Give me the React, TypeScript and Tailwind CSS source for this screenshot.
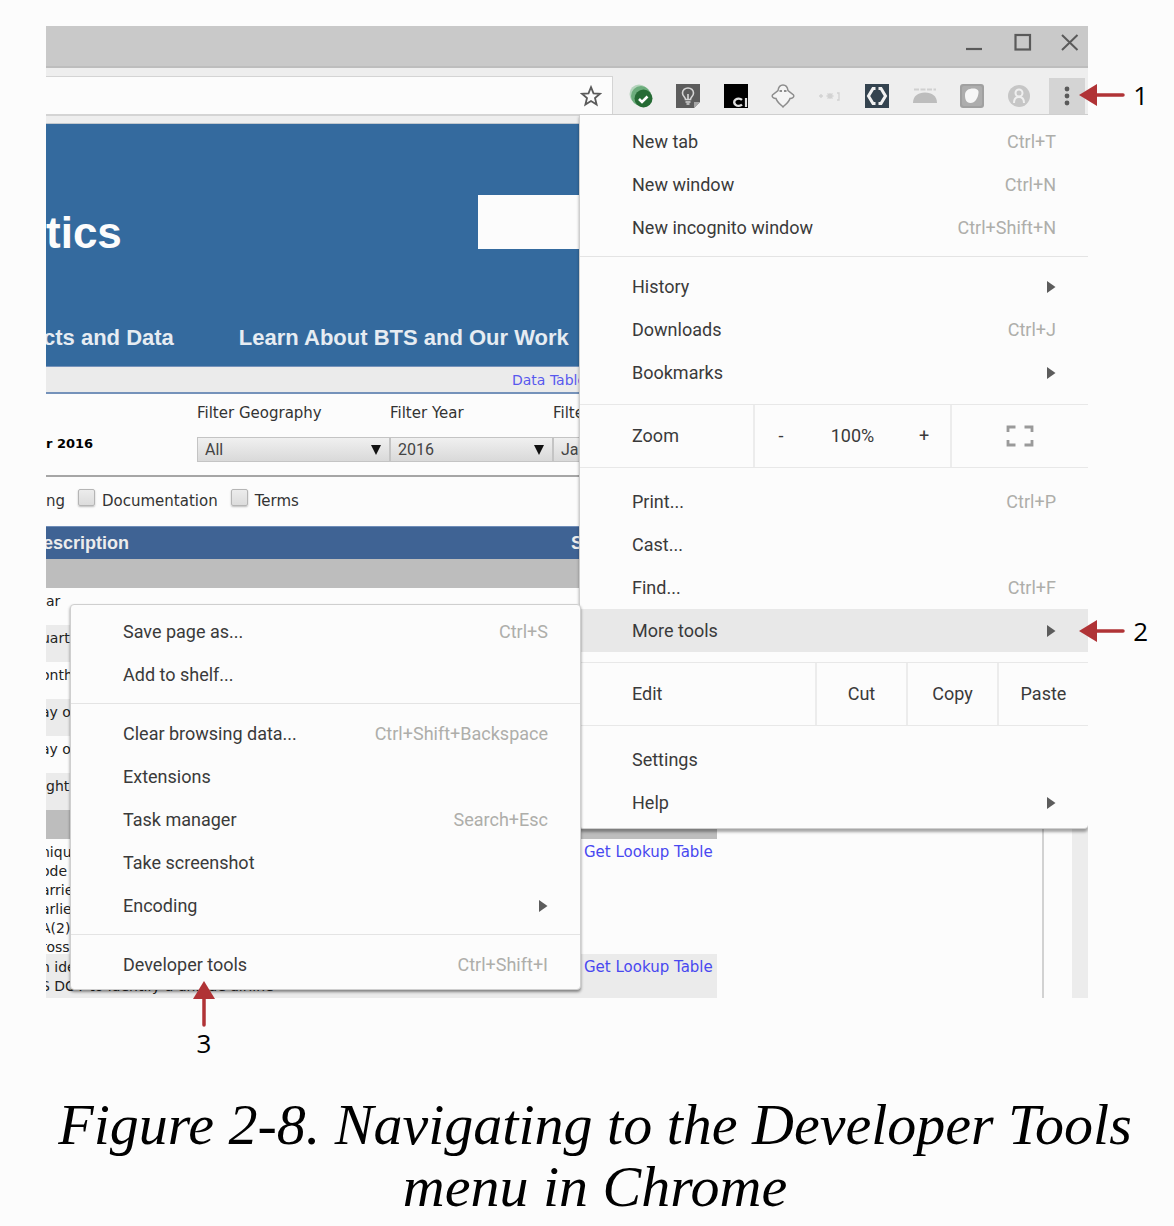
import type { ReactNode } from "react";

type Item = { label: string; keys?: string; sub?: boolean; active?: boolean };

const mainGroups: Item[][] = [
  [
    { label: "New tab", keys: "Ctrl+T" },
    { label: "New window", keys: "Ctrl+N" },
    { label: "New incognito window", keys: "Ctrl+Shift+N" },
  ],
  [
    { label: "History", sub: true },
    { label: "Downloads", keys: "Ctrl+J" },
    { label: "Bookmarks", sub: true },
  ],
  [
    { label: "Print...", keys: "Ctrl+P" },
    { label: "Cast..." },
    { label: "Find...", keys: "Ctrl+F" },
    { label: "More tools", sub: true, active: true },
  ],
  [{ label: "Settings" }, { label: "Help", sub: true }],
];

const toolGroups: Item[][] = [
  [{ label: "Save page as...", keys: "Ctrl+S" }, { label: "Add to shelf..." }],
  [
    { label: "Clear browsing data...", keys: "Ctrl+Shift+Backspace" },
    { label: "Extensions" },
    { label: "Task manager", keys: "Search+Esc" },
    { label: "Take screenshot" },
    { label: "Encoding", sub: true },
  ],
  [{ label: "Developer tools", keys: "Ctrl+Shift+I" }],
];

function Group({ items }: { items: Item[] }) {
  return (
    <ul>
      {items.map((it) => (
        <li key={it.label}>
          <button
            type="button"
            className={
              "flex h-[43px] w-full items-center justify-between pr-8 pl-[52px] text-left " +
              (it.active ? "bg-[#e8e8e8]" : "")
            }
          >
            <span>{it.label}</span>
            {it.keys && <span className="text-[#aeaeaa]">{it.keys}</span>}
            {it.sub && (
              <svg width="10" height="12" viewBox="0 0 10 12" aria-hidden="true">
                <path d="M1 0 L9.5 6 L1 12 Z" fill="#5c5c5c" />
              </svg>
            )}
          </button>
        </li>
      ))}
    </ul>
  );
}

const Divider = () => <hr className="mt-[7px] mb-2 border-[#e4e4e4]" />;

function Strip({ label, children }: { label: string; children: ReactNode }) {
  return (
    <div className="mt-[10px] mb-3 flex h-16 items-stretch border-y border-[#e8e8e8]">
      <span className="flex flex-1 items-center pl-[52px]">{label}</span>
      {children}
    </div>
  );
}

function MainMenu() {
  return (
    <nav
      aria-label="Browser menu"
      className="absolute top-[88px] right-0 w-[509px] rounded-b-sm border border-r-0 border-[#cfcfcf] bg-[#fcfcfc] pt-[5px] pb-1 shadow-[0_3px_3px_rgba(0,0,0,0.35)] [clip-path:inset(-4px_0_-6px_-4px)]"
    >
      <Group items={mainGroups[0]} />
      <Divider />
      <Group items={mainGroups[1]} />
      <Strip label="Zoom">
        <div className="flex w-[199px] items-center justify-between border-x-2 border-[#ececec] px-5">
          <button type="button" className="w-3" aria-label="Zoom out">
            -
          </button>
          <span>100%</span>
          <button type="button" className="w-3" aria-label="Zoom in">
            +
          </button>
        </div>
        <button type="button" aria-label="Full screen" className="flex w-[136px] items-center justify-center">
          <svg width="28" height="22" viewBox="0 0 28 22" fill="none" stroke="#9a9a9a" strokeWidth="2.800">
            <path d="M2 7V2H9.500M18.500 2H26V7M26 15V20H18.500M9.500 20H2V15" />
          </svg>
        </button>
      </Strip>
      <Group items={mainGroups[2]} />
      <Strip label="Edit">
        {["Cut", "Copy", "Paste"].map((t) => (
          <button key={t} type="button" className="w-[91px] border-l-2 border-[#ececec]">
            {t}
          </button>
        ))}
      </Strip>
      <Group items={mainGroups[3]} />
    </nav>
  );
}

function ToolsMenu() {
  return (
    <nav
      aria-label="More tools"
      className="absolute top-[578px] left-6 w-[511px] rounded-sm border border-[#cfcfcf] bg-[#fcfcfc] pt-[5px] pb-[3px] shadow-[0_2px_3px_rgba(0,0,0,0.45)]"
    >
      <Group items={toolGroups[0]} />
      <Divider />
      <Group items={toolGroups[1]} />
      <Divider />
      <Group items={toolGroups[2]} />
    </nav>
  );
}

function TitleBar() {
  return (
    <div className="flex h-[42px] items-center justify-end border-b-2 border-[#bdbdbd] bg-[#c9c9c9] pr-2 pb-[6px]">
      <button type="button" aria-label="Minimize" className="mr-[30px]">
        <svg width="20" height="20" viewBox="0 0 20 20" aria-hidden="true">
          <path d="M2 16H18" stroke="#5a5a5a" strokeWidth="2.200" />
        </svg>
      </button>
      <button type="button" aria-label="Maximize" className="mr-[28px]">
        <svg width="18" height="20" viewBox="0 0 18 20" aria-hidden="true">
          <rect x="1.500" y="2" width="14.500" height="14.500" fill="none" stroke="#5a5a5a" strokeWidth="2.200" />
        </svg>
      </button>
      <button type="button" aria-label="Close">
        <svg width="20" height="20" viewBox="0 0 20 20" aria-hidden="true">
          <path d="M2 2L17.500 17M17.500 2L2 17" stroke="#5a5a5a" strokeWidth="2" />
        </svg>
      </button>
    </div>
  );
}

function Icon({ children }: { children: ReactNode }) {
  return (
    <svg width="24" height="24" viewBox="0 0 24 24" fill="none" aria-hidden="true">
      {children}
    </svg>
  );
}

function Toolbar() {
  return (
    <div className="flex h-14 items-start border-b border-[#c2c8ce] bg-[#eeeeee]">
      <div className="relative mt-2 flex h-[40px] flex-1 items-center border-t border-r border-b-2 border-[#d4d4d4] bg-[#fcfcfc]">
        <input aria-label="Address" className="h-full w-full bg-transparent px-3 outline-none" />
        <svg width="22" height="22" viewBox="0 0 22 22" className="mr-[10px] shrink-0" fill="none" aria-hidden="true">
          <path
            d="M11 2.200L13.500 8.300L20 8.800L15 13L16.600 19.500L11 16L5.400 19.500L7 13L2 8.800L8.500 8.300Z"
            stroke="#5a5a5a"
            strokeWidth="1.800"
          />
        </svg>
      </div>
      <div className="mt-4 mr-[18px] ml-4 flex w-[402px] justify-between">
        <Icon>
          <circle cx="10" cy="10" r="9.500" fill="#b4d4bc" />
          <circle cx="12" cy="12" r="10" fill="#6cad7c" />
          <circle cx="14.500" cy="14.500" r="9" fill="#256b34" />
          <path d="M10 15L13 18L18.500 12.500" stroke="#fff" strokeWidth="2.600" />
        </Icon>
        <Icon>
          <path d="M0 0H24V18L18 24H0Z" fill="#5c5c5c" />
          <path d="M18 24V18H24Z" fill="#a5a5a5" />
          <path d="M9.500 15.500C9.500 13 6.500 12.500 6.500 9A5.500 5 0 0 1 17.500 9C17.500 12.500 14.500 13 14.500 15.500Z" stroke="#d5d5d5" strokeWidth="1.600" />
          <path d="M12 15.500V10M9.500 18H14.500M10.500 20H13.500" stroke="#d5d5d5" strokeWidth="1.600" />
        </Icon>
        <Icon>
          <rect width="24" height="24" fill="#000" />
          <path d="M18 15.800A4.500 3.600 0 1 0 18 20.700" stroke="#e0e0e0" strokeWidth="2.400" />
          <path d="M22 14V23" stroke="#e0e0e0" strokeWidth="2.200" />
        </Icon>
        <Icon>
          <path
            d="M7 6.500C7.500 3 9 1 12 1S16.500 3 17 6.500L22.500 11C23.500 13 21.500 14.500 19 14.500C18 18 15 20 12 23C9 20 6 18 5 14.500C2.500 14.500 0.500 13 1.500 11Z"
            stroke="#8d8d8d"
            strokeWidth="1.500"
            fill="#f4f4f4"
          />
          <path d="M8.500 7H11M13 7H15.500" stroke="#8d8d8d" strokeWidth="1.800" />
        </Icon>
        <Icon>
          <path d="M3 10V14M1 12H5M8.500 12H15.500M12 9V15M9.500 9.500L14.500 14.500M14.500 9.500L9.500 14.500M19 9H21V16H19" stroke="#d2d2d2" strokeWidth="1.300" />
        </Icon>
        <Icon>
          <rect width="24" height="24" fill="#34434f" />
          <path d="M10.500 4.500H8L3.500 12L8 19.500H10.500M13.500 4.500H16L20.500 12L16 19.500H13.500" stroke="#f2f2f2" strokeWidth="3" />
        </Icon>
        <Icon>
          <path d="M0 19C0 12 5 8.500 12 8.500S24 12 24 19Z" fill="#bdbdbd" />
          <path d="M1 5.500H23" stroke="#d0d0d0" strokeWidth="2" strokeDasharray="5 1.500" />
        </Icon>
        <Icon>
          <rect width="24" height="24" rx="3" fill="#a0a0a0" />
          <rect x="2" y="2" width="20" height="20" rx="2" fill="#adadad" />
          <path d="M5 11C5 6.500 9 4.500 13 4.500C17 4.500 19 6 18.500 9C18 14 15 19 10.500 19C6 19 5 15 5 11Z" fill="#f6f6f6" />
        </Icon>
        <Icon>
          <circle cx="12" cy="12" r="11" fill="#c6c6c6" />
          <circle cx="12" cy="9" r="3.500" stroke="#efefef" strokeWidth="2" />
          <path d="M7 19C7 15 9 13 12 13S17 15 17 19" stroke="#efefef" strokeWidth="2" />
        </Icon>
      </div>
      <button type="button" aria-label="Menu" className="mt-[10px] mr-[3px] flex h-9 w-9 items-center justify-center bg-[#d4d4d4]">
        <svg width="6" height="20" viewBox="0 0 6 20" fill="#5a5a5a" aria-hidden="true">
          <circle cx="3" cy="3" r="2.400" />
          <circle cx="3" cy="10" r="2.400" />
          <circle cx="3" cy="17" r="2.400" />
        </svg>
      </button>
    </div>
  );
}

function Filter({ label, value, box }: { label: string; value: string; box: string }) {
  return (
    <label className={"flex shrink-0 flex-col gap-[14px] " + box}>
      <span className="leading-5">{label}</span>
      <span className="relative block">
        <select className="block h-[25px] w-full appearance-none border border-[#c4c4c4] bg-linear-to-b from-[#f0f0f0] to-[#d9d9d9] pl-[7px] font-[Roboto] text-base leading-5 text-[#444]">
          <option>{value}</option>
        </select>
        <svg width="10" height="10" viewBox="0 0 10 10" className="pointer-events-none absolute top-2 right-[9px]" aria-hidden="true">
          <path d="M0 0H10L5 10Z" fill="#111" />
        </svg>
      </span>
    </label>
  );
}

function Check({ label }: { label: string }) {
  return (
    <label className="flex items-center gap-[7px]">
      <input
        type="checkbox"
        className="-mt-2 h-[17px] w-[17px] appearance-none rounded-xs border border-[#b5b5b5] bg-linear-to-b from-[#ececec] to-[#dcdcdc] shadow-[0_1px_2px_rgba(0,0,0,0.25)]"
      />
      {label}
    </label>
  );
}

const shortRows = [
  { text: "ar", cut: false },
  { text: "uart", cut: true },
  { text: "onth", cut: true },
  { text: "ay o", cut: true },
  { text: "ay o", cut: true },
  { text: "ght", cut: false },
];

function FieldsTable() {
  return (
    <table className="w-full table-fixed border-collapse leading-[19px] text-[#222]">
      <colgroup>
        <col className="w-[525px]" />
        <col className="w-[146px]" />
        <col />
      </colgroup>
      <thead>
        <tr className="h-8 border-t border-[#6f8db8] bg-[#3f6394] text-left font-['Liberation_Sans'] text-lg text-[#ececec]">
          <th className="overflow-hidden">
            <span className="-ml-[3px]">escription</span>
          </th>
          <th>S</th>
          <th />
        </tr>
      </thead>
      <tbody>
        <tr className="h-[29px]">
          <td colSpan={2} className="bg-[#bdbdbd]" />
        </tr>
        {shortRows.map((r, i) => (
          <tr key={i} className="h-[37px]">
            <td colSpan={2} className={"overflow-hidden pt-1 align-top " + (i % 2 ? "bg-[#ebebeb]" : "")}>
              <span className={r.cut ? "-ml-[5px]" : ""}>{r.text}</span>
            </td>
          </tr>
        ))}
        <tr className="h-[29px]">
          <td colSpan={2} className="bg-[#bdbdbd]" />
        </tr>
        <tr>
          <td className="overflow-hidden align-top">
            <div className="-ml-[5px] h-[115px] overflow-hidden pt-1 whitespace-pre">
              {"niqu\node B\narrie\narlier\nA(2)\nross"}
            </div>
          </td>
          <td className="pt-1 pl-[13px] align-top">
            <a href="#carrier" className="text-[15px] text-[#4848f0]">
              Get Lookup Table
            </a>
          </td>
        </tr>
        <tr>
          <td className="overflow-hidden bg-[#ebebeb] align-top">
            <div className="-ml-[5px] h-11 overflow-hidden pt-1 whitespace-pre">{"n ide\nS DOT to identify a unique airline"}</div>
          </td>
          <td className="bg-[#ebebeb] pt-1 pl-[13px] align-top">
            <a href="#airline" className="text-[15px] text-[#4848f0]">
              Get Lookup Table
            </a>
          </td>
        </tr>
      </tbody>
    </table>
  );
}

function WebPage() {
  return (
    <div className="flex overflow-hidden font-['DejaVu_Sans'] text-sm text-[#333]">
      <div className="min-w-0 flex-1">
        <header className="overflow-hidden bg-[#346a9e] pt-[71px] pb-[15px] font-['Liberation_Sans'] font-bold">
          <div className="flex h-[60px] items-start">
            <span className="w-[432px] self-end text-[44px] leading-none text-[#fcfcfc]">tics</span>
            <input aria-label="Search" className="h-[54px] w-[300px] bg-[#fcfcfc]" />
          </div>
          <div className="mt-[70px] -ml-[3px] flex gap-[65px] text-[22px] leading-[26px] whitespace-nowrap text-[#e6ecf2]">
            <a href="#data">cts and Data</a>
            <a href="#learn">Learn About BTS and Our Work</a>
          </div>
        </header>
        <div className="flex h-7 items-center border-t border-b-2 border-t-[#7592ba] border-b-[#7592ba] bg-[#ebebeb] pl-[466px]">
          <a href="#tables" className="text-sm text-[#5858ee]">
            Data Table
          </a>
        </div>
        <div className="mr-7 border-r-2 border-[#d2d2d2]">
          <div className="flex items-start overflow-hidden border-b-2 border-[#a6a6a6] pt-[9px] pb-[13px] text-[15px]">
            <strong className="w-[151px] shrink-0 pt-8 text-[13px] text-black">r 2016</strong>
            <Filter label="Filter Geography" value="All" box="w-[193px]" />
            <Filter label="Filter Year" value="2016" box="w-[163px]" />
            <Filter label="Filter" value="Jan" box="w-[193px]" />
          </div>
          <div className="flex h-[49px] items-center gap-[13px] text-[15px]">
            <span>ng</span>
            <Check label="Documentation" />
            <Check label="Terms" />
          </div>
          <FieldsTable />
        </div>
      </div>
      <div className="w-4 bg-[#ececec]" />
    </div>
  );
}

function LeftCallout({ n, pos }: { n: string; pos: string }) {
  return (
    <div className={"absolute -right-[60px] flex items-center gap-2 font-['Open_Sans'] text-[26px] leading-8 text-black " + pos}>
      <svg width="46" height="22" viewBox="0 0 46 22" aria-hidden="true">
        <path d="M0 11L18 0V22Z" fill="#b03336" />
        <path d="M16 11H44" stroke="#b03336" strokeWidth="3.500" strokeLinecap="round" />
      </svg>
      <span>{n}</span>
    </div>
  );
}

export default function App() {
  return (
    <main className="min-h-screen bg-[#fcfcfc] pt-[26px] pr-[30px] pl-[46px]">
      <figure>
        <div className="relative mr-14 font-[Roboto] text-lg text-[#3a3a3a]">
          <TitleBar />
          <Toolbar />
          <WebPage />
          <MainMenu />
          <ToolsMenu />
          <LeftCallout n="1" pos="top-[53px]" />
          <LeftCallout n="2" pos="top-[589px]" />
          <div className="absolute top-[955px] left-[147px] flex flex-col items-center font-['Open_Sans'] text-[26px] leading-8 text-black">
            <svg width="22" height="46" viewBox="0 0 22 46" aria-hidden="true">
              <path d="M11 0L22 18H0Z" fill="#b03336" />
              <path d="M11 16V44" stroke="#b03336" strokeWidth="3.500" strokeLinecap="round" />
            </svg>
            <span>3</span>
          </div>
        </div>
        <figcaption className="mt-24 text-center font-['Liberation_Serif'] text-[58px] leading-[62px] text-black italic">
          Figure 2-8. Navigating to the Developer Tools menu in Chrome
        </figcaption>
      </figure>
    </main>
  );
}
